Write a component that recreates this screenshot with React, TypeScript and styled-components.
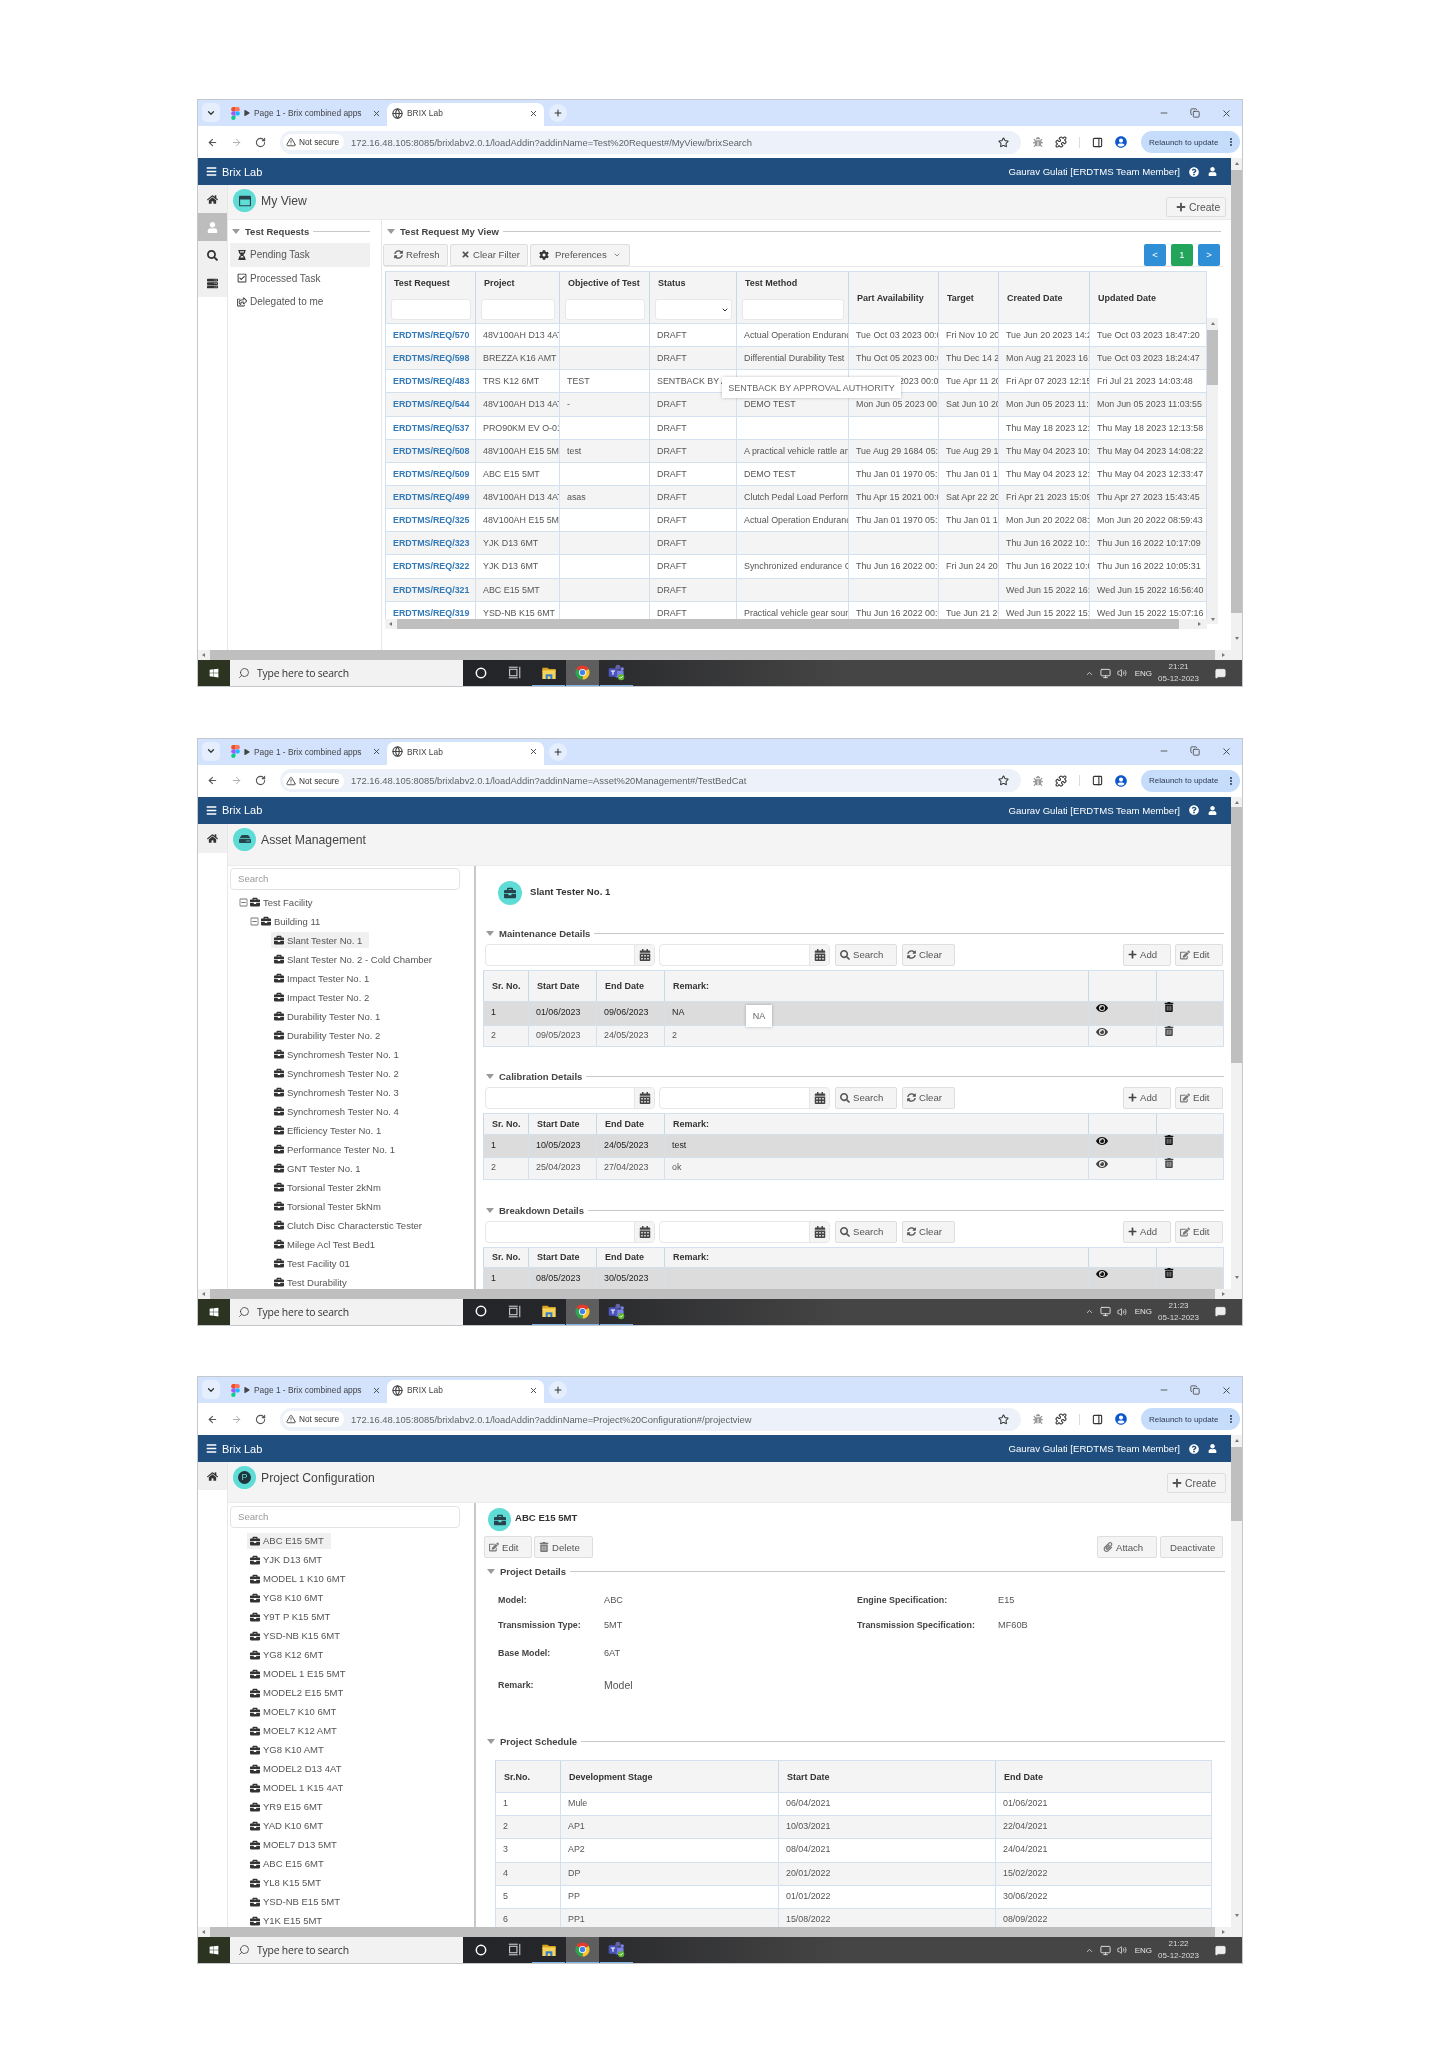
import React from "react"
import styled, { createGlobalStyle } from "styled-components"
import {
    FaHome, FaUser, FaSearch, FaServer, FaBriefcase, FaCalendarAlt, FaEye, FaTrashAlt, FaPlus, FaSyncAlt,
    FaTimes, FaCog, FaEdit, FaPaperclip, FaQuestionCircle, FaBars, FaRegCheckSquare, FaHourglassHalf,
    FaRegShareSquare, FaWindows, FaRegWindowMaximize, FaHdd, FaRegMinusSquare, FaBug,
    FaUserCircle, FaPlay,
} from "react-icons/fa"
import {
    ArrowLeft, ArrowRight, RotateCw, Star, Minus, Copy, X, Plus, Globe, TriangleAlert, ChevronDown,
    ChevronUp, MoreVertical, Search, MessageSquare, Monitor, Volume2, PanelRight, Puzzle,
} from "lucide-react"

const GlobalStyle = createGlobalStyle`
    html, body { margin: 0; padding: 0; background: white; }
    * { box-sizing: border-box; }
    body { font-family: "Liberation Sans", Arial, sans-serif; color: #555; }
`

const Page = styled.div`
    width: 1440px;
    height: 2050px;
    padding: 99px 0 0 197px;
    display: flex;
    flex-direction: column;
    gap: 50.5px;
    background: white;
`

const Frame = styled.div`
    width: 1046px;
    height: 588px;
    border: 1px solid #c4c7cc;
    display: flex;
    flex-direction: column;
    overflow: hidden;
    background: white;
    filter: blur(0.4px);
`

const TabStrip = styled.div`
    height: 26px;
    flex: none;
    background: #d3e3fd;
    display: flex;
    align-items: flex-end;
    padding-left: 4px;
    position: relative;
`

const TabMenu = styled.div`
    width: 18px;
    height: 19px;
    margin-bottom: 4px;
    border-radius: 5px;
    background: #e4eefd;
    display: flex;
    align-items: center;
    justify-content: center;
    color: #333;
`

const TabItem = styled.div<{ $active?: boolean; $w: number }>`
    width: ${p => p.$w}px;
    height: 23px;
    display: flex;
    align-items: center;
    gap: 4px;
    padding: 0 6px 3px ${p => (p.$active ? 5 : 11)}px;
    font-size: 8.4px;
    color: #444;
    white-space: nowrap;
    border-radius: 7px 7px 0 0;
    background: ${p => (p.$active ? "white" : "transparent")};
`

const TabTitle = styled.span`
    flex: 1;
    overflow: hidden;
`

const NewTab = styled.div`
    width: 18px;
    height: 18px;
    margin: 0 0 4px 5px;
    border-radius: 50%;
    background: #e4eefd;
    display: flex;
    align-items: center;
    justify-content: center;
    color: #333;
`

const WindowControls = styled.div`
    margin-left: auto;
    align-self: center;
    display: flex;
    gap: 21px;
    padding-right: 10px;
    color: #444;
`

const Toolbar = styled.div`
    height: 32px;
    flex: none;
    background: white;
    display: flex;
    align-items: center;
    padding-left: 9px;
    color: #555;
`

const NavIcons = styled.div`
    display: flex;
    gap: 13px;
    width: 73px;
`

const Omnibox = styled.div`
    width: 741px;
    height: 23px;
    border-radius: 12px;
    background: #edf2fa;
    display: flex;
    align-items: center;
    padding: 0 12px 0 3px;
`

const SecureChip = styled.div`
    width: 61px;
    height: 16px;
    border-radius: 8px;
    background: white;
    display: flex;
    align-items: center;
    gap: 3px;
    padding-left: 3px;
    font-size: 8.3px;
    color: #333;
    white-space: nowrap;
`

const UrlText = styled.span`
    margin-left: 7px;
    flex: 1;
    font-size: 9.4px;
    color: #5f6368;
    white-space: nowrap;
`

const ExtIcons = styled.div`
    display: flex;
    align-items: center;
    gap: 12px;
    margin-left: 12px;
    width: 108px;
    color: #444;
`

const Divider = styled.span`
    width: 1px;
    height: 11px;
    background: #d8dce2;
`

const Relaunch = styled.div`
    width: 99px;
    height: 22px;
    border-radius: 11px;
    background: #c6dcfb;
    display: flex;
    align-items: center;
    justify-content: space-between;
    padding: 0 4px 0 8px;
    font-size: 8px;
    color: #2c3a52;
    white-space: nowrap;
`

const Viewport = styled.div`
    height: 502px;
    flex: none;
    display: flex;
`

const AppArea = styled.div`
    flex: 1;
    min-width: 0;
    display: flex;
    flex-direction: column;
`

const AppHeader = styled.div`
    height: 27px;
    flex: none;
    background: #1f4e7f;
    color: white;
    display: flex;
    align-items: center;
    padding: 0 14px 0 8px;
`

const Brand = styled.div`
    display: flex;
    align-items: center;
    gap: 5px;
    font-size: 11px;
    flex: 1;
`

const UserName = styled.span`
    font-size: 9.6px;
    margin-right: 9px;
    white-space: nowrap;
`

const HeaderIcons = styled.span`
    display: flex;
    align-items: center;
    gap: 9px;
`

const Body = styled.div`
    flex: 1;
    min-height: 0;
    display: flex;
    overflow: hidden;
`

const Rail = styled.div`
    width: 30px;
    flex: none;
    border-right: 1px solid #e8e8e8;
`

const RailItem = styled.div<{ $active?: boolean; $h: number }>`
    height: ${p => p.$h}px;
    background: ${p => (p.$active ? "#bdbdbd" : "#f0f0f0")};
    color: ${p => (p.$active ? "white" : "#333")};
    display: flex;
    justify-content: center;
    padding-top: 9px;
`

const MainColumn = styled.div`
    flex: 1;
    min-width: 0;
    display: flex;
    flex-direction: column;
`

const TitleStrip = styled.div<{ $h: number }>`
    height: ${p => p.$h}px;
    flex: none;
    background: #f4f4f4;
    border-bottom: 1px solid #ebebeb;
    display: flex;
    align-items: flex-start;
    padding: 4px 5px 0 5px;
`

const TitleBadge = styled.div`
    width: 23px;
    height: 23px;
    flex: none;
    border-radius: 50%;
    background: #5fdcd6;
    color: #27444d;
    display: flex;
    align-items: center;
    justify-content: center;
`

const TitleLetter = styled.div`
    width: 13px;
    height: 13px;
    border-radius: 50%;
    background: #20343d;
    color: #5fdcd6;
    font-size: 9px;
    line-height: 13px;
    text-align: center;
`

const PageTitle = styled.div`
    font-size: 12.2px;
    color: #444;
    margin: 5px 0 0 5px;
    flex: 1;
`

const Panels = styled.div`
    flex: 1;
    min-height: 0;
    display: flex;
`

const LeftPanel = styled.div<{ $w: number; $heavy?: boolean }>`
    width: ${p => p.$w}px;
    flex: none;
    overflow: hidden;
    border-right: ${p => (p.$heavy ? "2px solid #c8c8c8" : "1px solid #e6e6e6")};
`

const RightPanel = styled.div`
    flex: 1;
    min-width: 0;
    overflow: hidden;
`

const Btn = styled.div<{ $w: number; $pad?: number; $ml?: number }>`
    width: ${p => p.$w}px;
    height: 22px;
    flex: none;
    margin-left: ${p => p.$ml ?? 0}px;
    background: #f4f4f4;
    border: 1px solid #dedede;
    border-radius: 2px;
    display: flex;
    align-items: center;
    gap: 3px;
    padding-left: ${p => p.$pad ?? 4}px;
    font-size: 9.6px;
    color: #555;
    white-space: nowrap;
`

const CreateBtn = styled(Btn)<{ $mt: number }>`
    margin-top: ${p => p.$mt}px;
    height: 20px;
    font-size: 10.4px;
`

const PrefBtn = styled(Btn)`
    gap: 6px;
`

const SectionTitle = styled.div<{ $mt?: number; $ml?: number; $mr?: number }>`
    display: flex;
    align-items: center;
    height: 12px;
    gap: 4px;
    margin: ${p => p.$mt ?? 0}px ${p => p.$mr ?? 0}px 0 ${p => p.$ml ?? 0}px;
    font-size: 9.5px;
    font-weight: bold;
    color: #444;
    white-space: nowrap;
    &::before {
        content: "";
        border-left: 4px solid transparent;
        border-right: 4px solid transparent;
        border-top: 5px solid #9a9a9a;
        margin-right: 1px;
    }
    &::after {
        content: "";
        flex: 1;
        height: 1px;
        background: #c8c8c8;
    }
`

const SideNav = styled.div`
    padding-top: 6px;
`

const SideItem = styled.div<{ $active?: boolean }>`
    height: 23.5px;
    margin: 0 0 0 2px;
    display: flex;
    align-items: center;
    gap: 3px;
    padding-left: 7px;
    font-size: 10px;
    color: #555;
    background: ${p => (p.$active ? "#f0f0f0" : "transparent")};
    width: 140px;
`

const ActionBar = styled.div`
    display: flex;
    gap: 2px;
    margin: 6px 11px 0 1px;
    height: 23px;
    align-items: center;
`

const ActionRule = styled.div`
    height: 1px;
    background: #e8e8e8;
    margin: 0 8px 4px 2px;
`

const Pager = styled.div`
    margin-left: auto;
    display: flex;
    gap: 5px;
`

const PageBtn = styled.div<{ $current?: boolean }>`
    width: 22px;
    height: 22px;
    border-radius: 2px;
    background: ${p => (p.$current ? "#22a55b" : "#2f8fd6")};
    color: white;
    font-size: 9.5px;
    display: flex;
    align-items: center;
    justify-content: center;
`

const GridArea = styled.div`
    display: flex;
    margin-left: 3px;
`

const GridColumn = styled.div`
    width: 822px;
    flex: none;
    position: relative;
`

const GridClip = styled.div`
    height: 348px;
    overflow: hidden;
`

const Row = styled.div<{ $cols: string; $h: number; $tone?: "white" | "grey" | "dark" }>`
    display: grid;
    grid-template-columns: ${p => p.$cols};
    height: ${p => p.$h}px;
    background: ${p => (p.$tone === "white" ? "white" : p.$tone === "dark" ? "#dcdcdc" : "#f4f4f4")};
    border-bottom: 1px solid #d3e1ee;
`

const Cell = styled.div<{ $top?: boolean; $lift?: number }>`
    min-width: 0;
    overflow: hidden;
    white-space: nowrap;
    padding: 0 7px ${p => p.$lift ?? 0}px;
    display: flex;
    align-items: ${p => (p.$top ? "flex-start" : "center")};
    font-size: 8.9px;
    color: #555;
    border-left: 1px solid #d3e1ee;
    &:last-child { border-right: 1px solid #d3e1ee; }
`

const Strong = styled.span<{ $dark?: boolean }>`
    color: ${p => (p.$dark ? "#222" : "#555")};
`

const RequestLink = styled.span`
    color: #337ab7;
    font-weight: bold;
    font-size: 8.9px;
`

const HeadCell = styled.div`
    min-width: 0;
    border-left: 1px solid #c9d8e5;
    font-size: 9px;
    font-weight: bold;
    color: #333;
    white-space: nowrap;
    display: flex;
    flex-direction: column;
    justify-content: center;
    padding: 0 8px;
    &:last-child { border-right: 1px solid #d3e1ee; }
`

const FilterHead = styled(HeadCell)`
    justify-content: flex-start;
    padding: 0;
`

const FilterTitle = styled.div`
    height: 22px;
    padding: 6px 8px 0;
`

const FilterBox = styled.div`
    height: 21px;
    margin: 5px 4px 0 5px;
    background: white;
    border: 1px solid #e8e8e8;
    border-radius: 3px;
    display: flex;
    align-items: center;
    justify-content: flex-end;
    padding-right: 2px;
    color: #333;
`

const TableTop = styled.div`
    border-top: 1px solid #d3e1ee;
`

const Tip = styled.div<{ $l: number; $t: number; $w: number; $h: number }>`
    position: absolute;
    left: ${p => p.$l}px;
    top: ${p => p.$t}px;
    width: ${p => p.$w}px;
    height: ${p => p.$h}px;
    background: white;
    box-shadow: 0 0 3px rgba(0, 0, 0, 0.25);
    font-size: 9px;
    color: #666;
    display: flex;
    align-items: center;
    justify-content: center;
    white-space: nowrap;
`

const HBar = styled.div<{ $lead: number; $trail: number }>`
    height: 10px;
    flex: none;
    background: #f1f1f1;
    display: flex;
    align-items: stretch;
    padding: 0 ${p => p.$trail}px 0 ${p => p.$lead}px;
    position: relative;
`

const HThumb = styled.div`
    flex: 1;
    background: #bfbfbf;
`

const HArrow = styled.span<{ $side: "left" | "right"; $at: number }>`
    position: absolute;
    top: 3px;
    ${p => p.$side}: ${p => p.$at}px;
    border-top: 2px solid transparent;
    border-bottom: 2px solid transparent;
    ${p => (p.$side === "left" ? "border-right" : "border-left")}: 3px solid #777;
`

const VBar = styled.div<{ $lead: number; $trail: number; $w: number; $h?: number; $mt?: number }>`
    width: ${p => p.$w}px;
    flex: none;
    height: ${p => (p.$h ? `${p.$h}px` : "auto")};
    margin-top: ${p => p.$mt ?? 0}px;
    background: #f1f1f1;
    display: flex;
    flex-direction: column;
    padding: ${p => p.$lead}px 0 ${p => p.$trail}px;
    position: relative;
`

const VThumb = styled.div`
    flex: 1;
    background: #bfbfbf;
`

const VArrow = styled.span<{ $side: "top" | "bottom"; $at: number }>`
    position: absolute;
    left: 50%;
    margin-left: -2px;
    ${p => p.$side}: ${p => p.$at}px;
    border-left: 2px solid transparent;
    border-right: 2px solid transparent;
    ${p => (p.$side === "top" ? "border-bottom" : "border-top")}: 3px solid #777;
`

const Taskbar = styled.div`
    height: 26px;
    flex: none;
    display: flex;
    align-items: stretch;
    background: linear-gradient(90deg, #1e1f22 0%, #26272a 35%, #454545 62%, #454545 100%);
    color: #e6e6e6;
`

const StartTile = styled.div`
    width: 32px;
    background: #2c3320;
    display: flex;
    align-items: center;
    justify-content: center;
    color: white;
`

const SearchBox = styled.div`
    width: 233px;
    background: #f2f2f2;
    display: flex;
    align-items: center;
    gap: 7px;
    padding-left: 8px;
    font-size: 10.4px;
    color: #333;
    font-family: "Open Sans", sans-serif;
    letter-spacing: -0.2px;
`

const TaskIcons = styled.div`
    display: flex;
    align-items: stretch;
    padding-left: 1px;
`

const TaskSlot = styled.div<{ $running?: boolean; $focus?: boolean }>`
    width: 33px;
    margin-right: 1px;
    display: flex;
    align-items: center;
    justify-content: center;
    background: ${p => (p.$focus ? "#5e5e5e" : "transparent")};
    border-bottom: 1px solid ${p => (p.$running ? "#7fb2e8" : "transparent")};
`

const Tray = styled.div`
    margin-left: auto;
    display: flex;
    align-items: center;
    gap: 6px;
    padding-right: 16px;
`

const TrayText = styled.span`
    font-size: 8px;
    margin: 0 0 0 2px;
`

const Clock = styled.div`
    font-size: 8px;
    line-height: 12px;
    text-align: center;
    margin-right: 10px;
    color: #dcdcdc;
`

const SearchInput = styled.div<{ $mt: number }>`
    width: 230px;
    height: 22px;
    margin: ${p => p.$mt}px 0 0 2px;
    border: 1px solid #e3e3e3;
    border-radius: 4px;
    background: white;
    font-size: 9.6px;
    color: #999;
    padding-left: 7px;
    line-height: 20px;
`

const Tree = styled.div<{ $mt: number }>`
    margin-top: ${p => p.$mt}px;
`

const TreeRow = styled.div<{ $indent: number }>`
    height: 19px;
    display: flex;
    align-items: center;
    padding-left: ${p => p.$indent}px;
`

const TreeLabel = styled.div<{ $selected?: boolean; $tight?: boolean }>`
    height: 16px;
    display: flex;
    align-items: center;
    gap: 3px;
    padding: 0 7px 0 ${p => (p.$tight ? 1 : 3)}px;
    font-size: 9.5px;
    color: #555;
    white-space: nowrap;
    background: ${p => (p.$selected ? "#f0f0f0" : "transparent")};
    & svg { color: #333; flex: none; }
`

const Expander = styled.span`
    display: flex;
    color: #777;
    margin-right: 1px;
`

const DetailHead = styled.div<{ $h: number; $pad: string; $gap: number }>`
    height: ${p => p.$h}px;
    display: flex;
    align-items: flex-start;
    gap: ${p => p.$gap}px;
    padding: ${p => p.$pad};
    font-size: 9.6px;
    font-weight: bold;
    color: #333;
`

const DetailName = styled.span<{ $mt: number }>`
    margin-top: ${p => p.$mt}px;
`

const DetailBadge = styled(TitleBadge)`
    width: 24px;
    height: 24px;
`

const Section = styled.div`
    padding: 0 7px 0 7px;
`

const Filters = styled.div`
    display: flex;
    align-items: center;
    margin: 4px 1px 4px 2px;
`

const DateField = styled.div<{ $w: number }>`
    width: ${p => p.$w}px;
    height: 22px;
    flex: none;
    margin-right: 4px;
    background: white;
    border: 1px solid #e6e6e6;
    border-radius: 4px;
    display: flex;
    justify-content: flex-end;
`

const CalendarAddon = styled.div`
    width: 20px;
    background: #f4f4f4;
    border-left: 1px solid #e6e6e6;
    border-radius: 0 3px 3px 0;
    display: flex;
    align-items: center;
    justify-content: center;
    color: #444;
`

const Spacer = styled.div`
    flex: 1;
`

const BoxedTable = styled.div`
    position: relative;
    border-top: 1px solid #d3e1ee;
`

const EditBar = styled.div`
    display: flex;
    gap: 2px;
    margin: 0 8px 0 8px;
    height: 22px;
`

const FieldGrid = styled.div`
    display: grid;
    grid-template-columns: 106px 253px 141px 1fr;
    grid-template-rows: 24px 26px 30px 34px;
    align-items: center;
    margin: 11px 0 0 22px;
`

const FieldLabel = styled.div`
    font-size: 8.9px;
    font-weight: bold;
    color: #444;
    white-space: nowrap;
`

const FieldValue = styled.div<{ $big?: boolean }>`
    font-size: ${p => (p.$big ? 10.5 : 9.2)}px;
    color: #555;
    white-space: nowrap;
`

const ScheduleBox = styled.div`
    margin: 13px 19px 0 19px;
    border-top: 1px solid #d3e1ee;
`

const requestCols = "90px 84px 90px 87px 112px 90px 60px 91px 118px"
const sectionCols = "45px 68px 68px 424px 68px 68px"
const scheduleCols = "65px 218px 217px 217px"

const requests = [
    ["ERDTMS/REQ/570", "48V100AH D13 4AT", "", "DRAFT", "Actual Operation Endurance", "Tue Oct 03 2023 00:00:00", "Fri Nov 10 2023", "Tue Jun 20 2023 14:22:10", "Tue Oct 03 2023 18:47:20"],
    ["ERDTMS/REQ/598", "BREZZA K16 AMT", "", "DRAFT", "Differential Durability Test", "Thu Oct 05 2023 00:00:00", "Thu Dec 14 2023", "Mon Aug 21 2023 16:11:20", "Tue Oct 03 2023 18:24:47"],
    ["ERDTMS/REQ/483", "TRS K12 6MT", "TEST", "SENTBACK BY APPROVAL", "", "Fri Mar 03 2023 00:00:00", "Tue Apr 11 2023", "Fri Apr 07 2023 12:15:20", "Fri Jul 21 2023 14:03:48"],
    ["ERDTMS/REQ/544", "48V100AH D13 4AT", "-", "DRAFT", "DEMO TEST", "Mon Jun 05 2023 00:00:00", "Sat Jun 10 2023", "Mon Jun 05 2023 11:03:00", "Mon Jun 05 2023 11:03:55"],
    ["ERDTMS/REQ/537", "PRO90KM EV O-01", "", "DRAFT", "", "", "", "Thu May 18 2023 12:13:00", "Thu May 18 2023 12:13:58"],
    ["ERDTMS/REQ/508", "48V100AH E15 5MT", "test", "DRAFT", "A practical vehicle rattle and", "Tue Aug 29 1684 05:00:00", "Tue Aug 29 1684", "Thu May 04 2023 10:00:00", "Thu May 04 2023 14:08:22"],
    ["ERDTMS/REQ/509", "ABC E15 5MT", "", "DRAFT", "DEMO TEST", "Thu Jan 01 1970 05:30:00", "Thu Jan 01 1970", "Thu May 04 2023 12:33:00", "Thu May 04 2023 12:33:47"],
    ["ERDTMS/REQ/499", "48V100AH D13 4AT", "asas", "DRAFT", "Clutch Pedal Load Performance", "Thu Apr 15 2021 00:00:00", "Sat Apr 22 2023", "Fri Apr 21 2023 15:09:00", "Thu Apr 27 2023 15:43:45"],
    ["ERDTMS/REQ/325", "48V100AH E15 5MT", "", "DRAFT", "Actual Operation Endurance", "Thu Jan 01 1970 05:30:00", "Thu Jan 01 1970", "Mon Jun 20 2022 08:59:00", "Mon Jun 20 2022 08:59:43"],
    ["ERDTMS/REQ/323", "YJK D13 6MT", "", "DRAFT", "", "", "", "Thu Jun 16 2022 10:17:00", "Thu Jun 16 2022 10:17:09"],
    ["ERDTMS/REQ/322", "YJK D13 6MT", "", "DRAFT", "Synchronized endurance C", "Thu Jun 16 2022 00:00:00", "Fri Jun 24 2022", "Thu Jun 16 2022 10:05:00", "Thu Jun 16 2022 10:05:31"],
    ["ERDTMS/REQ/321", "ABC E15 5MT", "", "DRAFT", "", "", "", "Wed Jun 15 2022 16:56:00", "Wed Jun 15 2022 16:56:40"],
    ["ERDTMS/REQ/319", "YSD-NB K15 6MT", "", "DRAFT", "Practical vehicle gear sound", "Thu Jun 16 2022 00:00:00", "Tue Jun 21 2022", "Wed Jun 15 2022 15:07:00", "Wed Jun 15 2022 15:07:16"],
]

const testers = [
    "Slant Tester No. 1", "Slant Tester No. 2 - Cold Chamber", "Impact Tester No. 1", "Impact Tester No. 2",
    "Durability Tester No. 1", "Durability Tester No. 2", "Synchromesh Tester No. 1", "Synchromesh Tester No. 2",
    "Synchromesh Tester No. 3", "Synchromesh Tester No. 4", "Efficiency Tester No. 1", "Performance Tester No. 1",
    "GNT Tester No. 1", "Torsional Tester 2kNm", "Torsional Tester 5kNm", "Clutch Disc Characterstic Tester",
    "Milege Acl Test Bed1", "Test Facility 01", "Test Durability",
]

const projects = [
    "ABC E15 5MT", "YJK D13 6MT", "MODEL 1 K10 6MT", "YG8 K10 6MT", "Y9T P K15 5MT", "YSD-NB K15 6MT", "YG8 K12 6MT",
    "MODEL 1 E15 5MT", "MODEL2 E15 5MT", "MOEL7 K10 6MT", "MOEL7 K12 AMT", "YG8 K10 AMT", "MODEL2 D13 4AT",
    "MODEL 1 K15 4AT", "YR9 E15 6MT", "YAD K10 6MT", "MOEL7 D13 5MT", "ABC E15 6MT", "YL8 K15 5MT", "YSD-NB E15 5MT",
    "Y1K E15 5MT",
]

const schedule = [
    ["1", "Mule", "06/04/2021", "01/06/2021"],
    ["2", "AP1", "10/03/2021", "22/04/2021"],
    ["3", "AP2", "08/04/2021", "24/04/2021"],
    ["4", "DP", "20/01/2022", "15/02/2022"],
    ["5", "PP", "01/01/2022", "30/06/2022"],
    ["6", "PP1", "15/08/2022", "08/09/2022"],
]

const FigmaLogo = () => (
    <svg width="9" height="13" viewBox="0 0 12 18">
        <path d="M0 3a3 3 0 0 1 3-3h3v6H3a3 3 0 0 1-3-3z" fill="#f24e1e" />
        <path d="M6 0h3a3 3 0 0 1 0 6H6z" fill="#ff7262" />
        <path d="M0 9a3 3 0 0 1 3-3h3v6H3a3 3 0 0 1-3-3z" fill="#a259ff" />
        <circle cx="9" cy="9" r="3" fill="#1abcfe" />
        <path d="M0 15a3 3 0 0 1 3-3h3v3a3 3 0 0 1-6 0z" fill="#0acf83" />
    </svg>
)

const ChromeLogo = () => (
    <svg width="17" height="17" viewBox="0 0 24 24">
        <path d="M12 12 3.34 7A10 10 0 0 1 20.66 7z" fill="#e33b2e" />
        <path d="M12 12 20.66 7A10 10 0 0 1 12 22z" fill="#f8c52c" />
        <path d="M12 12 12 22A10 10 0 0 1 3.34 7z" fill="#2ea44f" />
        <circle cx="12" cy="12" r="5" fill="white" />
        <circle cx="12" cy="12" r="3.8" fill="#3f83ea" />
    </svg>
)

const ExplorerLogo = () => (
    <svg width="16" height="16" viewBox="0 0 24 24">
        <path d="M2 4h8l2 2h10v4H2z" fill="#d9a520" />
        <path d="M2 8h20v13H2z" fill="#f7d35b" />
        <path d="M7 14h10v7H7z" fill="#2b7cd3" />
        <path d="M10 17h4v4h-4z" fill="#f7d35b" />
    </svg>
)

const TeamsLogo = () => (
    <svg width="17" height="17" viewBox="0 0 24 24">
        <circle cx="14" cy="4.5" r="3.5" fill="#6264a7" />
        <circle cx="20" cy="7" r="2.5" fill="#7b83eb" />
        <rect x="10" y="9" width="12" height="10" rx="2" fill="#7b83eb" />
        <rect x="1" y="6" width="12" height="12" rx="1.5" fill="#4b53bc" />
        <path d="M4 9h6v1.6H7.800V15H6.200v-4.400H4z" fill="white" />
        <circle cx="18.500" cy="18.500" r="4.500" fill="#5cb531" />
        <path d="m16.300 18.500 1.600 1.600 2.800-3" stroke="white" strokeWidth="1.300" fill="none" />
    </svg>
)

const TaskViewIcon = () => (
    <svg width="13" height="13" viewBox="0 0 16 16" fill="none" stroke="#ddd" strokeWidth="1.200">
        <rect x="2" y="4" width="9" height="8" />
        <path d="M1 1.500h11M1 14.500h11M14.500 1v14" />
    </svg>
)

const Chrome = ({ url }: { url: string }) => (
    <>
        <TabStrip>
            <TabMenu><ChevronDown size={10} strokeWidth={3} /></TabMenu>
            <TabItem $w={167}>
                <FigmaLogo />
                <FaPlay size={6} color="#444" />
                <TabTitle>Page 1 - Brix combined apps</TabTitle>
                <X size={9} strokeWidth={2.5} />
            </TabItem>
            <TabItem $active $w={157}>
                <Globe size={11} strokeWidth={2.5} />
                <TabTitle>BRIX Lab</TabTitle>
                <X size={9} strokeWidth={2.5} />
            </TabItem>
            <NewTab><Plus size={10} strokeWidth={2.5} /></NewTab>
            <WindowControls>
                <Minus size={10} />
                <Copy size={10} />
                <X size={11} />
            </WindowControls>
        </TabStrip>
        <Toolbar>
            <NavIcons>
                <ArrowLeft size={11} strokeWidth={2.4} />
                <ArrowRight size={11} strokeWidth={2} color="#aaa" />
                <RotateCw size={11} strokeWidth={2.4} />
            </NavIcons>
            <Omnibox>
                <SecureChip><TriangleAlert size={10} />Not secure</SecureChip>
                <UrlText>{url}</UrlText>
                <Star size={11} strokeWidth={2.2} color="#333" />
            </Omnibox>
            <ExtIcons>
                <FaBug size={10} color="#999" />
                <Puzzle size={12} strokeWidth={2.2} color="#333" />
                <Divider />
                <PanelRight size={11} strokeWidth={2.4} color="#333" />
                <FaUserCircle size={12} color="#0b57d0" />
            </ExtIcons>
            <Relaunch>Relaunch to update<MoreVertical size={10} strokeWidth={3} /></Relaunch>
        </Toolbar>
    </>
)

const AppTop = () => (
    <AppHeader>
        <Brand><FaBars size={11} />Brix Lab</Brand>
        <UserName>Gaurav Gulati [ERDTMS Team Member]</UserName>
        <HeaderIcons>
            <FaQuestionCircle size={10} />
            <FaUser size={9} />
        </HeaderIcons>
    </AppHeader>
)

const MirroredSearch = styled(Search)`
    transform: scaleX(-1);
`

const WindowsTaskbar = ({ time }: { time: string }) => (
    <Taskbar>
        <StartTile><FaWindows size={10} /></StartTile>
        <SearchBox><MirroredSearch size={12} strokeWidth={1.5} />Type here to search</SearchBox>
        <TaskIcons>
            <TaskSlot><svg width="12" height="12" viewBox="0 0 12 12"><circle cx="6" cy="6" r="4.700" fill="none" stroke="white" strokeWidth="1.500" /></svg></TaskSlot>
            <TaskSlot><TaskViewIcon /></TaskSlot>
            <TaskSlot $running><ExplorerLogo /></TaskSlot>
            <TaskSlot $running $focus><ChromeLogo /></TaskSlot>
            <TaskSlot $running><TeamsLogo /></TaskSlot>
        </TaskIcons>
        <Tray>
            <ChevronUp size={9} />
            <Monitor size={11} />
            <Volume2 size={10} />
            <TrayText>ENG</TrayText>
            <Clock>{time}<br />05-12-2023</Clock>
            <MessageSquare size={11} fill="#eee" color="#eee" />
        </Tray>
    </Taskbar>
)

const PageScroll = ({ lead, trail }: { lead: number; trail: number }) => (
    <VBar $lead={lead} $trail={trail} $w={11}>
        <VThumb />
        <VArrow $side="top" $at={4} />
        <VArrow $side="bottom" $at={20} />
    </VBar>
)

const BottomScroll = () => (
    <HBar $lead={12} $trail={16}>
        <HThumb />
        <HArrow $side="left" $at={4} />
        <HArrow $side="right" $at={6} />
    </HBar>
)

const MyViewWindow = () => (
    <Frame>
        <Chrome url="172.16.48.105:8085/brixlabv2.0.1/loadAddin?addinName=Test%20Request#/MyView/brixSearch" />
        <Viewport>
            <AppArea>
                <AppTop />
                <Body>
                    <Rail>
                        <RailItem $h={28}><FaHome size={11} /></RailItem>
                        <RailItem $h={28} $active><FaUser size={11} /></RailItem>
                        <RailItem $h={28}><FaSearch size={11} /></RailItem>
                        <RailItem $h={28}><FaServer size={11} /></RailItem>
                    </Rail>
                    <MainColumn>
                        <TitleStrip $h={35}>
                            <TitleBadge><FaRegWindowMaximize size={12} /></TitleBadge>
                            <PageTitle>My View</PageTitle>
                            <CreateBtn $w={60} $pad={9} $mt={8}><FaPlus size={10} />Create</CreateBtn>
                        </TitleStrip>
                        <Panels>
                            <LeftPanel $w={154}>
                                <SectionTitle $mt={5} $ml={4} $mr={11}>Test Requests</SectionTitle>
                                <SideNav>
                                    <SideItem $active><FaHourglassHalf size={10} color="#333" />Pending Task</SideItem>
                                    <SideItem><FaRegCheckSquare size={10} color="#333" />Processed Task</SideItem>
                                    <SideItem><FaRegShareSquare size={10} color="#333" />Delegated to me</SideItem>
                                </SideNav>
                            </LeftPanel>
                            <RightPanel>
                                <SectionTitle $mt={5} $ml={5} $mr={10}>Test Request My View</SectionTitle>
                                <ActionBar>
                                    <Btn $w={65} $pad={10}><FaSyncAlt size={9} />Refresh</Btn>
                                    <Btn $w={78} $pad={10}><FaTimes size={9} />Clear Filter</Btn>
                                    <PrefBtn $w={100} $pad={8}><FaCog size={10} color="#333" />Preferences<ChevronDown size={8} /></PrefBtn>
                                    <Pager>
                                        <PageBtn>&lt;</PageBtn>
                                        <PageBtn $current>1</PageBtn>
                                        <PageBtn>&gt;</PageBtn>
                                    </Pager>
                                </ActionBar>
                                <ActionRule />
                                <GridArea>
                                    <GridColumn>
                                        <GridClip>
                                            <TableTop>
                                                <Row $cols={requestCols} $h={52}>
                                                    {["Test Request", "Project", "Objective of Test", "Status", "Test Method"].map(h => (
                                                        <FilterHead key={h}>
                                                            <FilterTitle>{h}</FilterTitle>
                                                            <FilterBox>{h === "Status" && <ChevronDown size={8} strokeWidth={3} />}</FilterBox>
                                                        </FilterHead>
                                                    ))}
                                                    {["Part Availability", "Target", "Created Date", "Updated Date"].map(h => (
                                                        <HeadCell key={h}>{h}</HeadCell>
                                                    ))}
                                                </Row>
                                                {requests.map((r, i) => (
                                                    <Row key={r[0]} $cols={requestCols} $h={23.15} $tone={i % 2 ? "grey" : "white"}>
                                                        <Cell><RequestLink>{r[0]}</RequestLink></Cell>
                                                        {r.slice(1).map((v, j) => <Cell key={j}>{v}</Cell>)}
                                                    </Row>
                                                ))}
                                            </TableTop>
                                        </GridClip>
                                        <HBar $lead={12} $trail={28}>
                                            <HThumb />
                                            <HArrow $side="left" $at={4} />
                                            <HArrow $side="right" $at={6} />
                                        </HBar>
                                        <Tip $l={337} $t={106} $w={179} $h={21}>SENTBACK BY APPROVAL AUTHORITY</Tip>
                                    </GridColumn>
                                    <VBar $lead={12} $trail={239} $w={11} $h={306} $mt={47}>
                                        <VThumb />
                                        <VArrow $side="top" $at={4} />
                                        <VArrow $side="bottom" $at={3} />
                                    </VBar>
                                </GridArea>
                            </RightPanel>
                        </Panels>
                    </MainColumn>
                </Body>
                <BottomScroll />
            </AppArea>
            <PageScroll lead={12} trail={47} />
        </Viewport>
        <WindowsTaskbar time="21:21" />
    </Frame>
)

type Detail = {
    title: string
    mt: number
    head: number
    rows: { h: number; cells: string[] }[]
    tip?: boolean
}

const details: Detail[] = [
    {
        title: "Maintenance Details", mt: 0, head: 31, tip: true,
        rows: [{ h: 24, cells: ["1", "01/06/2023", "09/06/2023", "NA"] }, { h: 21, cells: ["2", "09/05/2023", "24/05/2023", "2"] }],
    },
    {
        title: "Calibration Details", mt: 24, head: 21,
        rows: [{ h: 23, cells: ["1", "10/05/2023", "24/05/2023", "test"] }, { h: 22, cells: ["2", "25/04/2023", "27/04/2023", "ok"] }],
    },
    {
        title: "Breakdown Details", mt: 25, head: 20,
        rows: [{ h: 23, cells: ["1", "08/05/2023", "30/05/2023", ""] }, { h: 22, cells: ["2", "", "", ""] }],
    },
]

const DetailBlock = ({ d }: { d: Detail }) => (
    <Section>
        <SectionTitle $mt={d.mt} $ml={3}>{d.title}</SectionTitle>
        <Filters>
            <DateField $w={170}><CalendarAddon><FaCalendarAlt size={12} /></CalendarAddon></DateField>
            <DateField $w={171}><CalendarAddon><FaCalendarAlt size={12} /></CalendarAddon></DateField>
            <Btn $w={62} $ml={1}><FaSearch size={10} />Search</Btn>
            <Btn $w={53} $ml={5}><FaSyncAlt size={9} />Clear</Btn>
            <Spacer />
            <Btn $w={48}><FaPlus size={9} color="#444" />Add</Btn>
            <Btn $w={48} $ml={4}><FaEdit size={10} color="#777" />Edit</Btn>
        </Filters>
        <BoxedTable>
            <Row $cols={sectionCols} $h={d.head}>
                <HeadCell>Sr. No.</HeadCell>
                <HeadCell>Start Date</HeadCell>
                <HeadCell>End Date</HeadCell>
                <HeadCell>Remark:</HeadCell>
                <HeadCell />
                <HeadCell />
            </Row>
            {d.rows.map((r, i) => (
                <Row key={i} $cols={sectionCols} $h={r.h} $tone={i === 0 ? "dark" : "grey"}>
                    {r.cells.map((c, j) => <Cell key={j} $lift={2}><Strong $dark={i === 0}>{c}</Strong></Cell>)}
                    <Cell $top><FaEye size={12} color={i === 0 ? "#111" : "#444"} /></Cell>
                    <Cell $top><FaTrashAlt size={10} color={i === 0 ? "#111" : "#444"} /></Cell>
                </Row>
            ))}
            {d.tip && <Tip $l={263} $t={34} $w={26} $h={22}>NA</Tip>}
        </BoxedTable>
    </Section>
)

const AssetWindow = () => (
    <Frame>
        <Chrome url="172.16.48.105:8085/brixlabv2.0.1/loadAddin?addinName=Asset%20Management#/TestBedCat" />
        <Viewport>
            <AppArea>
                <AppTop />
                <Body>
                    <Rail><RailItem $h={29}><FaHome size={11} /></RailItem></Rail>
                    <MainColumn>
                        <TitleStrip $h={42}>
                            <TitleBadge><FaHdd size={12} /></TitleBadge>
                            <PageTitle>Asset Management</PageTitle>
                        </TitleStrip>
                        <Panels>
                            <LeftPanel $w={248} $heavy>
                                <SearchInput $mt={2}>Search</SearchInput>
                                <Tree $mt={3}>
                                    <TreeRow $indent={11}>
                                        <Expander><FaRegMinusSquare size={9} /></Expander>
                                        <TreeLabel $tight><FaBriefcase size={10} />Test Facility</TreeLabel>
                                    </TreeRow>
                                    <TreeRow $indent={22}>
                                        <Expander><FaRegMinusSquare size={9} /></Expander>
                                        <TreeLabel $tight><FaBriefcase size={10} />Building 11</TreeLabel>
                                    </TreeRow>
                                    {testers.map((t, i) => (
                                        <TreeRow key={t} $indent={43}>
                                            <TreeLabel $selected={i === 0}><FaBriefcase size={10} />{t}</TreeLabel>
                                        </TreeRow>
                                    ))}
                                </Tree>
                            </LeftPanel>
                            <RightPanel>
                                <DetailHead $h={62} $pad="15px 0 0 22px" $gap={8}>
                                    <DetailBadge><FaBriefcase size={12} /></DetailBadge>
                                    <DetailName $mt={5}>Slant Tester No. 1</DetailName>
                                </DetailHead>
                                {details.map(d => <DetailBlock key={d.title} d={d} />)}
                            </RightPanel>
                        </Panels>
                    </MainColumn>
                </Body>
                <BottomScroll />
            </AppArea>
            <PageScroll lead={10} trail={236} />
        </Viewport>
        <WindowsTaskbar time="21:23" />
    </Frame>
)

const ProjectWindow = () => (
    <Frame>
        <Chrome url="172.16.48.105:8085/brixlabv2.0.1/loadAddin?addinName=Project%20Configuration#/projectview" />
        <Viewport>
            <AppArea>
                <AppTop />
                <Body>
                    <Rail><RailItem $h={28}><FaHome size={11} /></RailItem></Rail>
                    <MainColumn>
                        <TitleStrip $h={41}>
                            <TitleBadge><TitleLetter>P</TitleLetter></TitleBadge>
                            <PageTitle>Project Configuration</PageTitle>
                            <CreateBtn $w={59} $pad={4} $mt={7}><FaPlus size={10} />Create</CreateBtn>
                        </TitleStrip>
                        <Panels>
                            <LeftPanel $w={248} $heavy>
                                <SearchInput $mt={3}>Search</SearchInput>
                                <Tree $mt={3}>
                                    {projects.map((t, i) => (
                                        <TreeRow key={t} $indent={19}>
                                            <TreeLabel $selected={i === 0}><FaBriefcase size={10} />{t}</TreeLabel>
                                        </TreeRow>
                                    ))}
                                </Tree>
                            </LeftPanel>
                            <RightPanel>
                                <DetailHead $h={33} $pad="5px 0 0 12px" $gap={4}>
                                    <TitleBadge><FaBriefcase size={12} /></TitleBadge>
                                    <DetailName $mt={4}>ABC E15 5MT</DetailName>
                                </DetailHead>
                                <EditBar>
                                    <Btn $w={48}><FaEdit size={10} color="#777" />Edit</Btn>
                                    <Btn $w={59}><FaTrashAlt size={10} color="#777" />Delete</Btn>
                                    <Spacer />
                                    <Btn $w={60} $pad={5}><FaPaperclip size={10} color="#777" />Attach</Btn>
                                    <Btn $w={63} $pad={9} $ml={1}>Deactivate</Btn>
                                </EditBar>
                                <SectionTitle $mt={7} $ml={11} $mr={6}>Project Details</SectionTitle>
                                <FieldGrid>
                                    <FieldLabel>Model:</FieldLabel><FieldValue>ABC</FieldValue>
                                    <FieldLabel>Engine Specification:</FieldLabel><FieldValue>E15</FieldValue>
                                    <FieldLabel>Transmission Type:</FieldLabel><FieldValue>5MT</FieldValue>
                                    <FieldLabel>Transmission Specification:</FieldLabel><FieldValue>MF60B</FieldValue>
                                    <FieldLabel>Base Model:</FieldLabel><FieldValue>6AT</FieldValue>
                                    <Spacer /><Spacer />
                                    <FieldLabel>Remark:</FieldLabel><FieldValue $big>Model</FieldValue>
                                </FieldGrid>
                                <SectionTitle $mt={33} $ml={11} $mr={6}>Project Schedule</SectionTitle>
                                <ScheduleBox>
                                    <Row $cols={scheduleCols} $h={32}>
                                        <HeadCell>Sr.No.</HeadCell>
                                        <HeadCell>Development Stage</HeadCell>
                                        <HeadCell>Start Date</HeadCell>
                                        <HeadCell>End Date</HeadCell>
                                    </Row>
                                    {schedule.map((s, i) => (
                                        <Row key={s[0]} $cols={scheduleCols} $h={23.2} $tone={i % 2 ? "grey" : "white"}>
                                            {s.map((v, j) => <Cell key={j} $lift={2}>{v}</Cell>)}
                                        </Row>
                                    ))}
                                </ScheduleBox>
                            </RightPanel>
                        </Panels>
                    </MainColumn>
                </Body>
                <BottomScroll />
            </AppArea>
            <PageScroll lead={12} trail={416} />
        </Viewport>
        <WindowsTaskbar time="21:22" />
    </Frame>
)

const App = () => (
    <>
        <GlobalStyle />
        <Page>
            <MyViewWindow />
            <AssetWindow />
            <ProjectWindow />
        </Page>
    </>
)

export default App
